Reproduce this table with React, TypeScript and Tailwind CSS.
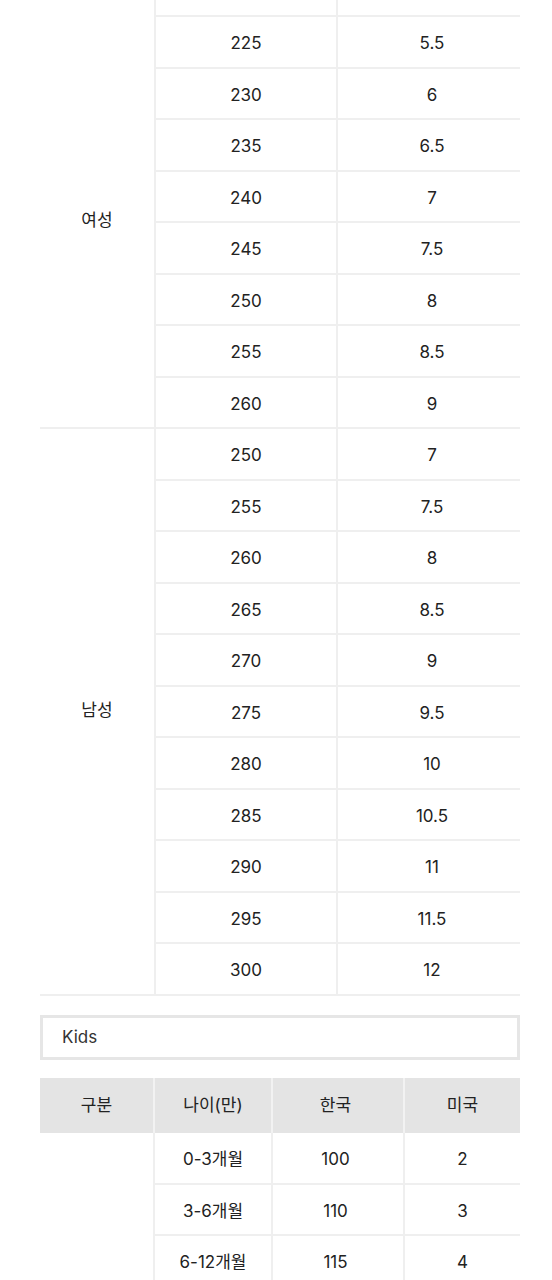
const women = [
  ['225', '5.5'],
  ['230', '6'],
  ['235', '6.5'],
  ['240', '7'],
  ['245', '7.5'],
  ['250', '8'],
  ['255', '8.5'],
  ['260', '9'],
];

const men = [
  ['250', '7'],
  ['255', '7.5'],
  ['260', '8'],
  ['265', '8.5'],
  ['270', '9'],
  ['275', '9.5'],
  ['280', '10'],
  ['285', '10.5'],
  ['290', '11'],
  ['295', '11.5'],
  ['300', '12'],
];

const kids = [
  ['0-3개월', '100', '2'],
  ['3-6개월', '110', '3'],
  ['6-12개월', '115', '4'],
  ['12-18개월', '120', '5'],
  ['18-24개월', '125', '6'],
];

function SizeRow({ kr, us, last }: { kr: string; us: string; last?: boolean }) {
  return (
    <div
      className={
        last
          ? 'flex h-[49.5px] items-center'
          : 'flex h-[51.5px] items-center border-b-2 border-[#efefef]'
      }
    >
      <div className="flex h-full w-[182px] items-center justify-center border-r-2 border-[#efefef] pt-[4px]">
        {kr}
      </div>
      <div className="flex h-full flex-1 items-center justify-center pl-[6px] pt-[4px]">{us}</div>
    </div>
  );
}

function Group({ label, rows }: { label: string; rows: string[][] }) {
  return (
    <div className="flex border-b-2 border-[#efefef]">
      <div className="flex w-[116px] items-center justify-center border-r-2 border-[#efefef] pb-[2px]">
        {label}
      </div>
      <div className="flex-1">
        {rows.map(([kr, us], i) => (
          <SizeRow key={kr} kr={kr} us={us} last={i === rows.length - 1} />
        ))}
      </div>
    </div>
  );
}

export default function App() {
  return (
    <div className="min-h-[1280px] overflow-hidden bg-white font-[Inter,'Noto_Sans_CJK_KR',sans-serif] text-[17px] text-[#222]">
      <div className="ml-10 mt-[-34.5px] w-[480px]">
        <div className="flex">
          <div className="w-[116px] border-r-2 border-[#efefef]" />
          <div className="flex-1">
            <SizeRow kr="220" us="5" />
          </div>
        </div>
        <Group label="여성" rows={women} />
        <Group label="남성" rows={men} />

        <div className="mt-[19.5px] flex h-[45px] items-center border-[3px] border-[#e6e6e6] pl-[19px] pt-[1px] text-[#333]">
          Kids
        </div>

        <div className="mt-[18px] flex h-[55px] gap-[2px] bg-[#f2f2f2]">
          <div className="flex w-[113px] items-center justify-center bg-[#e4e4e4]">구분</div>
          <div className="flex w-[116px] items-center justify-center bg-[#e4e4e4]">나이(만)</div>
          <div className="flex w-[130px] items-center justify-center bg-[#e4e4e4] pr-[5px]">한국</div>
          <div className="flex flex-1 items-center justify-center bg-[#e4e4e4]">미국</div>
        </div>

        <div className="flex">
          <div className="w-[115px] border-r-2 border-[#efefef]" />
          <div className="flex-1">
            {kids.map(([age, kr, us]) => (
              <div key={age} className="flex h-[51.5px] items-center border-b-2 border-[#efefef]">
                <div className="flex h-full w-[118px] items-center justify-center border-r-2 border-[#efefef] pt-[4px]">
                  {age}
                </div>
                <div className="flex h-full w-[132px] items-center justify-center border-r-2 border-[#efefef] pr-[5px] pt-[4px]">
                  {kr}
                </div>
                <div className="flex h-full flex-1 items-center justify-center pt-[4px]">{us}</div>
              </div>
            ))}
          </div>
        </div>
      </div>
    </div>
  );
}
